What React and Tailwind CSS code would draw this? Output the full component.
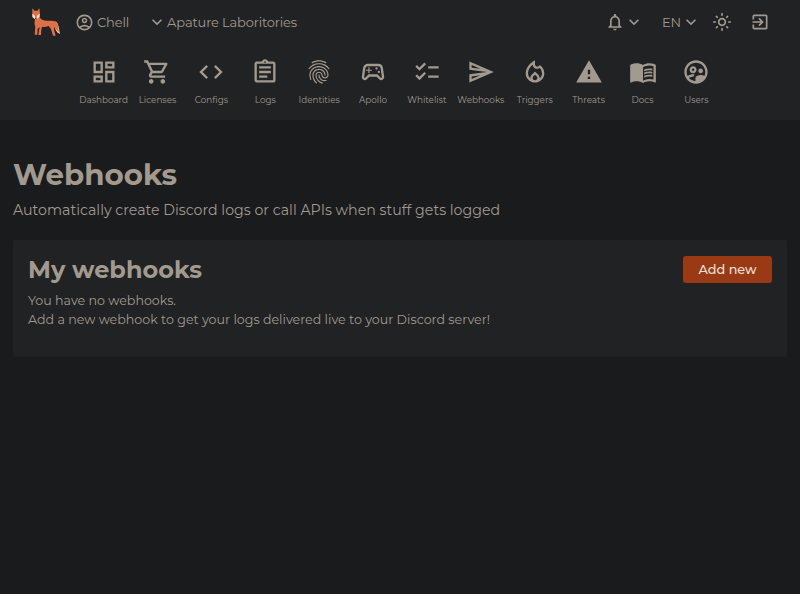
import {
  MdChecklist,
  MdCode,
  MdExitToApp,
  MdExpandMore,
  MdFingerprint,
  MdMenuBook,
  MdOutlineAccountCircle,
  MdOutlineAssignment,
  MdOutlineDashboard,
  MdOutlineLightMode,
  MdOutlineLocalFireDepartment,
  MdOutlineNotifications,
  MdOutlineSend,
  MdOutlineShoppingCart,
  MdOutlineSportsEsports,
  MdOutlineSupervisedUserCircle,
  MdWarning,
} from "react-icons/md";

const Fox = () => (
  <svg width="30" height="28" viewBox="0 0 90 84">
    <path fill="#efd3ae" d="M74 40c9 8 10 22 13 38-10-4-16-13-16-27z" />
    <path fill="#dc7048" d="M4 1l7 7h8l6-7 2 16-2 10c8 13 22 11 36 11 10 0 16 3 19 9 3 9 1 16 4 25-7-4-11-9-13-16l-2 8 5 19h-8l-6-20-7-9c-8 3-14 4-20 2l-2 9-1 16h-8l4-24-6 6-1 17h-8l2-24c-3-6-3-14-1-23l-8-9z" />
    <path fill="#f5dcc4" d="M4 17l7 5 2 8-3 3-6-6zM26 17l-7 5-3 8 3 2 7-6z" />
    <path fill="#5a3023" d="M12 29h5l-2 4h-2z" />
  </svg>
);

const navItems = [
  { name: "Dashboard", Icon: MdOutlineDashboard },
  { name: "Licenses", Icon: MdOutlineShoppingCart },
  { name: "Configs", Icon: MdCode },
  { name: "Logs", Icon: MdOutlineAssignment },
  { name: "Identities", Icon: MdFingerprint },
  { name: "Apollo", Icon: MdOutlineSportsEsports },
  { name: "Whitelist", Icon: MdChecklist },
  { name: "Webhooks", Icon: MdOutlineSend },
  { name: "Triggers", Icon: MdOutlineLocalFireDepartment },
  { name: "Threats", Icon: MdWarning },
  { name: "Docs", Icon: MdMenuBook },
  { name: "Users", Icon: MdOutlineSupervisedUserCircle },
];

const Header = () => (
  <header className="h-[120px] bg-[#202223]">
    <div className="flex items-center h-11 pl-[31px] pr-[30px] text-[13px] tracking-[-0.15px]">
      <Fox />
      <button className="flex items-center gap-[3px] ml-[14px]">
        <MdOutlineAccountCircle size={19} />
        <span className="pt-px">Chell</span>
      </button>
      <button className="flex items-center ml-[18px]">
        <MdExpandMore size={20} />
        <span className="pt-px">Apature Laboritories</span>
      </button>
      <div className="flex items-center ml-auto">
        <button className="flex items-center">
          <MdOutlineNotifications size={20} />
          <MdExpandMore size={20} className="-ml-px" />
        </button>
        <button className="flex items-center ml-[18px]">
          <span className="pt-px">EN</span>
          <MdExpandMore size={20} />
        </button>
        <MdOutlineLightMode size={20} className="ml-[11px]" />
        <MdExitToApp size={20} className="ml-[18px]" />
      </div>
    </div>
    <nav className="flex justify-center">
      {navItems.map(({ name, Icon }) => (
        <a key={name} className="flex flex-col items-center w-[53.9px] pt-[14px]">
          <Icon size={28} />
          <span className="mt-[7.5px] text-[8.8px] leading-3">{name}</span>
        </a>
      ))}
    </nav>
  </header>
);

const App = () => (
  <div className="min-h-screen bg-[#1a1b1d] text-[#a29a8f] font-['Montserrat','Inter',sans-serif]">
    <Header />
    <main className="px-[13px] pt-9">
      <h1 className="text-[29.3px] leading-[38px] font-bold">Webhooks</h1>
      <p className="mt-1 text-[14.2px] leading-6">
        Automatically create Discord logs or call APIs when stuff gets logged
      </p>
      <section className="flex items-start justify-between h-[117px] mt-[18px] p-[15px] rounded-xs bg-[#202223]">
        <div>
          <h2 className="text-2xl leading-[30px] font-bold">My webhooks</h2>
          <p className="mt-[6px] text-[12.65px] leading-[19px]">
            You have no webhooks.
            <br />
            Add a new webhook to get your logs delivered live to your Discord
            server!
          </p>
        </div>
        <button className="w-[89px] h-[27px] mt-px rounded-[3px] bg-[#993a15] text-[12.8px] font-medium text-[#ece0d8]">
          Add new
        </button>
      </section>
    </main>
  </div>
);

export default App;
